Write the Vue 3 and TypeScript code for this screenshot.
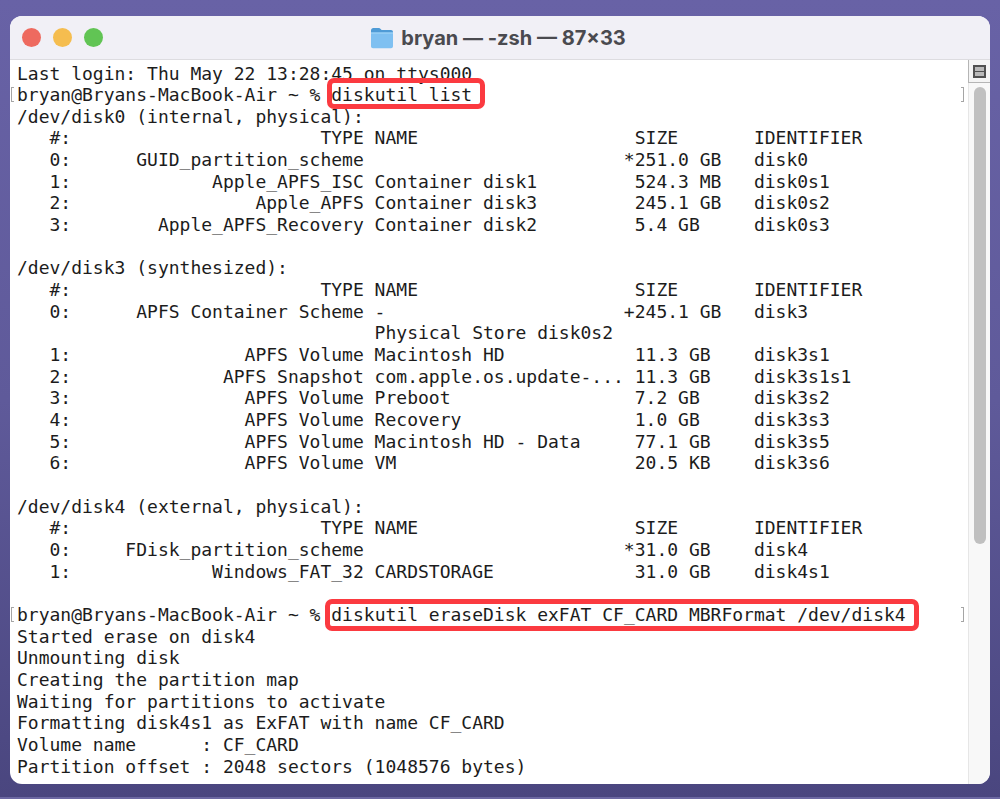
<script setup lang="ts">
interface Line {
  text?: string
  prompt?: string
  cmd?: string
  kind?: string
}
const lines: Line[] = [
  { text: 'Last login: Thu May 22 13:28:45 on ttys000' },
  { prompt: 'bryan@Bryans-MacBook-Air ~ % ', cmd: 'diskutil list', kind: 'short' },
  { text: '/dev/disk0 (internal, physical):' },
  { text: '   #:                       TYPE NAME                    SIZE       IDENTIFIER' },
  { text: '   0:      GUID_partition_scheme                        *251.0 GB   disk0' },
  { text: '   1:             Apple_APFS_ISC Container disk1         524.3 MB   disk0s1' },
  { text: '   2:                 Apple_APFS Container disk3         245.1 GB   disk0s2' },
  { text: '   3:        Apple_APFS_Recovery Container disk2         5.4 GB     disk0s3' },
  { text: '' },
  { text: '/dev/disk3 (synthesized):' },
  { text: '   #:                       TYPE NAME                    SIZE       IDENTIFIER' },
  { text: '   0:      APFS Container Scheme -                      +245.1 GB   disk3' },
  { text: '                                 Physical Store disk0s2' },
  { text: '   1:                APFS Volume Macintosh HD            11.3 GB    disk3s1' },
  { text: '   2:              APFS Snapshot com.apple.os.update-... 11.3 GB    disk3s1s1' },
  { text: '   3:                APFS Volume Preboot                 7.2 GB     disk3s2' },
  { text: '   4:                APFS Volume Recovery                1.0 GB     disk3s3' },
  { text: '   5:                APFS Volume Macintosh HD - Data     77.1 GB    disk3s5' },
  { text: '   6:                APFS Volume VM                      20.5 KB    disk3s6' },
  { text: '' },
  { text: '/dev/disk4 (external, physical):' },
  { text: '   #:                       TYPE NAME                    SIZE       IDENTIFIER' },
  { text: '   0:     FDisk_partition_scheme                        *31.0 GB    disk4' },
  { text: '   1:             Windows_FAT_32 CARDSTORAGE             31.0 GB    disk4s1' },
  { text: '' },
  { prompt: 'bryan@Bryans-MacBook-Air ~ % ', cmd: 'diskutil eraseDisk exFAT CF_CARD MBRFormat /dev/disk4', kind: 'long' },
  { text: 'Started erase on disk4' },
  { text: 'Unmounting disk' },
  { text: 'Creating the partition map' },
  { text: 'Waiting for partitions to activate' },
  { text: 'Formatting disk4s1 as ExFAT with name CF_CARD' },
  { text: 'Volume name      : CF_CARD' },
  { text: 'Partition offset : 2048 sectors (1048576 bytes)' },
]
</script>

<template>
  <div class="desktop">
    <div class="window">
      <header class="titlebar">
        <div class="lights">
          <span class="light red"></span>
          <span class="light yellow"></span>
          <span class="light green"></span>
        </div>
        <div class="title">
          <svg class="folder" width="24" height="22" viewBox="0 0 24 22">
            <path d="M1 3.5C1 2.1 2 1 3.4 1h5.4c.8 0 1.3.3 1.8.9l1 1.1H21c1.2 0 2 .9 2 2v1H1z" fill="#4f9bd6" />
            <path d="M1 5.5h22v13.7c0 1.2-.9 2-2 2H3c-1.1 0-2-.8-2-2z" fill="#7fc0f1" />
            <path d="M1 5.5h22v1H1z" fill="#a6d7f8" />
          </svg>
          <span>bryan — -zsh — 87×33</span>
        </div>
      </header>
      <div class="body">
        <div class="terminal">
          <div v-for="(line, i) in lines" :key="i" class="row">
            <template v-if="line.cmd">
              <i class="bracket left"></i>
              <span>{{ line.prompt }}</span><span class="mark" :class="line.kind">{{ line.cmd }}</span>
              <i class="bracket right"></i>
            </template>
            <template v-else>{{ line.text }}</template>
          </div>
        </div>
        <aside class="scrollbar">
          <div class="split">
            <span class="split-icon"><b></b><b></b></span>
          </div>
          <div class="thumb"></div>
        </aside>
      </div>
    </div>
  </div>
</template>

<style>
html, body { margin: 0; padding: 0; }
</style>

<style scoped>
.desktop {
  box-sizing: border-box;
  width: 1000px;
  height: 799px;
  padding: 16px 10px 15px;
  overflow: hidden;
  background: linear-gradient(180deg, #6862a6 0%, #5f5a9a 50%, #4a467f 99.7%, #6c68a2 99.8%);
}
.window {
  display: flex;
  flex-direction: column;
  height: 100%;
  border-radius: 12px;
  overflow: hidden;
  background: #fff;
}
.titlebar {
  position: relative;
  flex: none;
  height: 43px;
  display: flex;
  align-items: center;
  justify-content: center;
  background: #f1f0f6;
  border-bottom: 1px solid #dddce0;
}
.lights {
  position: absolute;
  left: 12px;
  top: 12px;
  display: flex;
  gap: 12px;
}
.light {
  width: 19px;
  height: 19px;
  border-radius: 50%;
}
.red { background: #ee6a5f; }
.yellow { background: #f5bd4f; }
.green { background: #61c454; }
.title {
  display: flex;
  align-items: center;
  gap: 7px;
  margin-left: -4px;
  font: 700 20px/24px Inter, "Liberation Sans", sans-serif;
  color: #4a4a4f;
}
.folder { flex: none; }
.body {
  flex: 1;
  min-height: 0;
  display: flex;
}
.terminal {
  flex: 1;
  min-width: 0;
  padding: 2.5px 0 0 7px;
  font: 400 18px/21.66px "DejaVu Sans Mono", monospace;
  color: #1c1c1c;
  overflow: hidden;
}
.row {
  position: relative;
  height: 21.66px;
  white-space: pre;
}
.mark {
  position: relative;
}
.mark::after {
  content: "";
  position: absolute;
  border: 5px solid #fb3a40;
  border-radius: 7px;
}
.short::after {
  left: -4px;
  right: -13px;
  top: -6px;
  bottom: -4px;
}
.long::after {
  left: -6px;
  right: -13px;
  top: -5px;
  bottom: -6px;
}
.bracket {
  position: absolute;
  top: 3px;
  width: 3px;
  height: 15px;
  border: 1px solid #a5a5a5;
  box-sizing: border-box;
}
.bracket.left {
  left: -6px;
  border-right: 0;
}
.bracket.right {
  left: 944px;
  border-left: 0;
}
.scrollbar {
  flex: none;
  width: 22px;
  box-sizing: border-box;
  display: flex;
  flex-direction: column;
  align-items: center;
  background: #f8f8f8;
  border-left: 1px solid #e6e6e6;
}
.split {
  align-self: stretch;
  height: 22px;
  display: flex;
  align-items: center;
  justify-content: center;
  border-bottom: 1px solid #b5b5b5;
  margin-left: -1px;
  border-left: 1px solid #b5b5b5;
  background: #f4f4f4;
}
.split-icon {
  box-sizing: border-box;
  width: 13px;
  height: 13px;
  display: flex;
  flex-direction: column;
  gap: 1px;
  padding: 2px;
  background: #505050;
}
.split-icon b {
  flex: 1;
  background: #b9b9b9;
}
.thumb {
  width: 12px;
  height: 457px;
  margin-top: 4px;
  border-radius: 6px;
  background: #c0c0c0;
}
</style>
